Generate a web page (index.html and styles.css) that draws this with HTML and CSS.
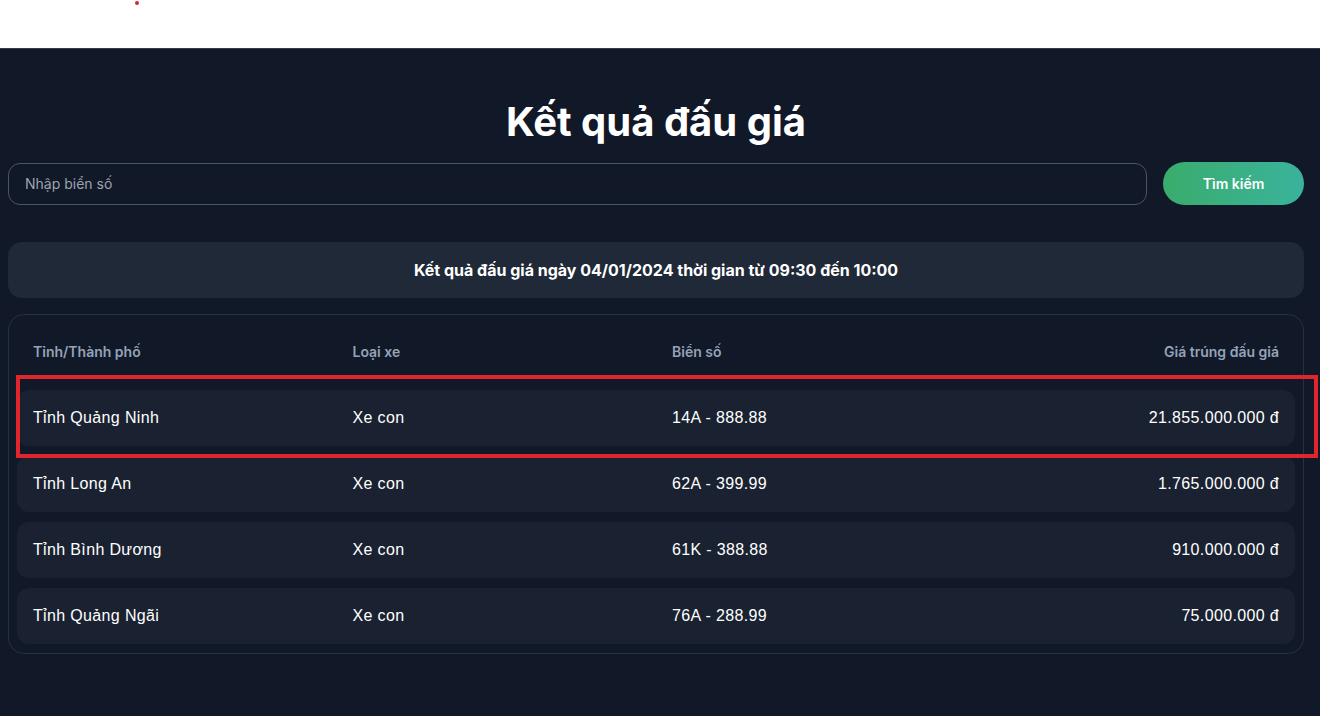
FILE: index.html
```html
<!DOCTYPE html>
<html lang="vi">
<head>
<meta charset="utf-8">
<title>Kết quả đấu giá</title>
<link rel="stylesheet" href="styles.css">
</head>
<body>
<header class="topbar"><span class="dot"></span></header>
<main class="page">
  <h1 class="title">Kết quả đấu giá</h1>
  <div class="search">
    <input class="search-input" type="text" placeholder="Nhập biển số">
    <button class="search-btn">Tìm kiếm</button>
  </div>
  <div class="info">Kết quả đấu giá ngày 04/01/2024 thời gian từ 09:30 đến 10:00</div>
  <section class="card">
    <div class="thead">
      <div class="th">Tỉnh/Thành phố</div>
      <div class="th">Loại xe</div>
      <div class="th">Biển số</div>
      <div class="th right">Giá trúng đấu giá</div>
    </div>
    <div class="rows">
      <div class="row"><div class="td">Tỉnh Quảng Ninh</div><div class="td">Xe con</div><div class="td">14A - 888.88</div><div class="td right">21.855.000.000 đ</div></div>
      <div class="row"><div class="td">Tỉnh Long An</div><div class="td">Xe con</div><div class="td">62A - 399.99</div><div class="td right">1.765.000.000 đ</div></div>
      <div class="row"><div class="td">Tỉnh Bình Dương</div><div class="td">Xe con</div><div class="td">61K - 388.88</div><div class="td right">910.000.000 đ</div></div>
      <div class="row"><div class="td">Tỉnh Quảng Ngãi</div><div class="td">Xe con</div><div class="td">76A - 288.99</div><div class="td right">75.000.000 đ</div></div>
    </div>
  </section>
</main>
<div class="highlight"></div>
</body>
</html>
```

FILE: styles.css
```css
* { box-sizing: border-box; }
html, body { margin: 0; padding: 0; }
body {
  background: #111827;
  font-family: Inter, "Liberation Sans", sans-serif;
  color: #ffffff;
  height: 716px;
  overflow: hidden;
}
.topbar {
  height: 49px;
  background: #ffffff;
  border-bottom: 1px solid #353d4b;
  display: flex;
  align-items: flex-start;
  padding-left: 135px;
}
.dot {
  width: 4px;
  height: 4px;
  border-radius: 50%;
  background: #d42a2a;
  margin-top: 1px;
}
.page {
  padding: 49px 16px 0 8px;
}
.title {
  margin: 0;
  font-size: 40px;
  line-height: 48px;
  font-weight: 700;
  text-align: center;
  color: #ffffff;
}
.search {
  margin-top: 16px;
  display: flex;
  align-items: center;
  gap: 16px;
}
.search-input {
  flex: 1;
  height: 42px;
  border: 1px solid #4b5563;
  border-radius: 12px;
  background: #111827;
  padding: 0 16px;
  font-family: Inter, sans-serif;
  font-size: 14px;
  color: #e5e7eb;
  outline: none;
}
.search-input::placeholder { color: #9ca3af; }
.search-btn {
  width: 141px;
  height: 43px;
  border: none;
  border-radius: 9999px;
  background: linear-gradient(90deg, #3aac6c 0%, #3ab39c 100%);
  color: #ffffff;
  font-family: Inter, sans-serif;
  font-size: 14px;
  font-weight: 600;
}
.info {
  margin-top: 37px;
  height: 56px;
  background: #1f2937;
  border-radius: 14px;
  display: flex;
  align-items: center;
  justify-content: center;
  font-size: 16px;
  font-weight: 700;
  color: #ffffff;
}
.card {
  margin-top: 16px;
  border: 1px solid #263041;
  border-radius: 16px;
  padding: 8px 8px 9px 8px;
}
.thead, .row {
  display: grid;
  grid-template-columns: repeat(4, 1fr);
}
.thead {
  height: 56px;
  align-items: center;
}
.th {
  padding: 0 16px;
  font-size: 14px;
  font-weight: 600;
  color: #94a3b8;
}
.rows {
  margin-top: 11px;
  display: flex;
  flex-direction: column;
  gap: 10px;
}
.row {
  height: 56px;
  align-items: center;
  background: #1a2231;
  border-radius: 12px;
}
.td {
  padding: 0 16px;
  font-family: "Liberation Sans", Arial, sans-serif;
  font-size: 16px;
  letter-spacing: 0.35px;
  color: #ffffff;
}
.right { text-align: right; }
.highlight {
  position: absolute;
  left: 16px;
  top: 375px;
  width: 1302px;
  height: 83px;
  border: 4px solid #e1252c;
  pointer-events: none;
}
```
